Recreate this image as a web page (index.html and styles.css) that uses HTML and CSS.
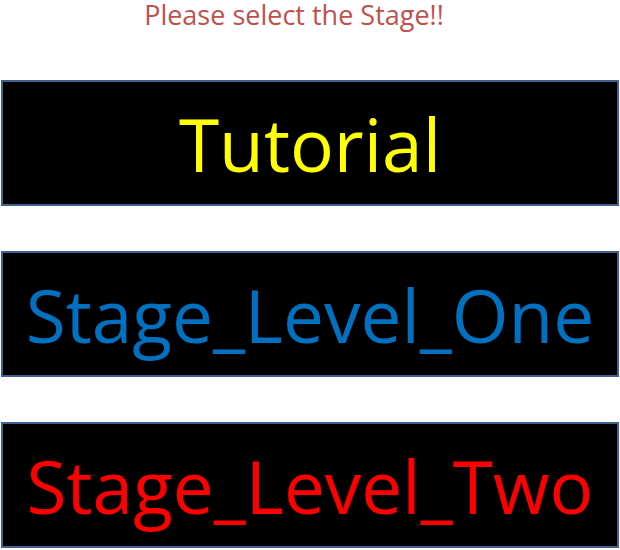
FILE: index.html
```html
<!DOCTYPE html>
<html>
<head>
<meta charset="utf-8">
<link rel="stylesheet" href="styles.css">
</head>
<body>
<div class="page">
  <div class="title">Please select the Stage!!</div>
  <div class="stage tutorial">Tutorial</div>
  <div class="stage one">Stage_Level_One</div>
  <div class="stage two">Stage_Level_Two</div>
</div>
</body>
</html>
```
FILE: styles.css
```css
html, body {
  margin: 0;
  padding: 0;
  background: #ffffff;
}
.page {
  width: 620px;
  height: 550px;
  display: flex;
  flex-direction: column;
  align-items: center;
  font-family: "Open Sans", "Noto Sans", sans-serif;
}
.title {
  color: #c0504d;
  font-size: 27px;
  line-height: 29px;
  margin-right: 32px;
  height: 80px;
}
.stage {
  box-sizing: border-box;
  width: 618px;
  height: 126px;
  background: #000000;
  border: 2px solid #3f618f;
  display: flex;
  align-items: center;
  justify-content: center;
  font-size: 73px;
  line-height: 1;
}
.stage + .stage {
  margin-top: 45px;
}
.tutorial { color: #ffff00; }
.one { color: #0070c0; }
.two { color: #ff0000; }
```
